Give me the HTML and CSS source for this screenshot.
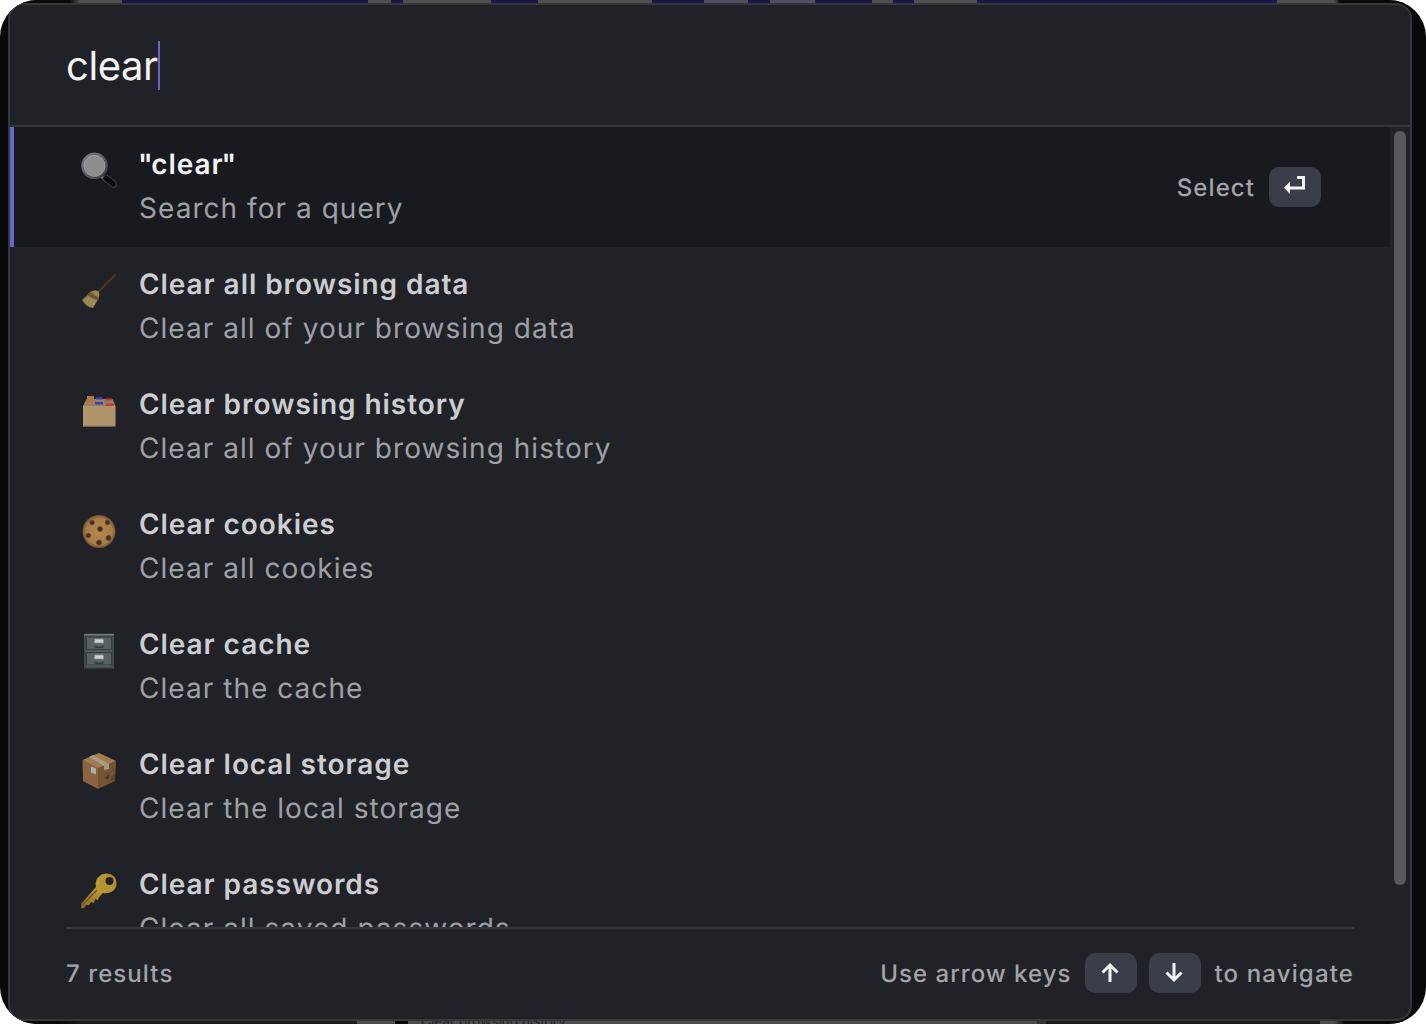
FILE: index.html
```html
<!DOCTYPE html>
<html lang="en">
<head>
<meta charset="utf-8">
<title>Command palette</title>
<link rel="stylesheet" href="styles.css">
</head>
<body>
<div class="window">
  <div class="backdrop-top"></div>
  <main class="palette">
    <header class="search"><span class="query">clear</span><span class="caret"></span></header>
    <section class="results">
      <div class="list">
        <article class="item selected">
          <svg class="icon" viewBox="0 0 60 60"><defs><linearGradient id="rim" x1="0" y1="0" x2="1" y2="1"><stop stop-color="#777b80"/><stop offset="1" stop-color="#3b4047"/></linearGradient></defs><path d="M31 36l5 5" stroke="#77787b" stroke-width="3"/><path d="M36.500 38.500l6.500 5.500" stroke="#3c3e42" stroke-width="7.500" stroke-linecap="round"/><path d="M36.500 38.500l6.500 5.500" stroke="#0a0b0d" stroke-width="5.500" stroke-linecap="round"/><circle cx="24.500" cy="25.800" r="12" fill="#8b8d8e" stroke="url(#rim)" stroke-width="2.500"/><circle cx="24.500" cy="25.800" r="10.500" fill="none" stroke="#999b9c" stroke-width=".8"/></svg>
          <div class="copy"><h2><span class="quote">"</span>clea<span class="last">r</span>"</h2><p>Search for a query</p></div>
          <div class="action"><span>Select</span><kbd><svg viewBox="0 0 52 40"><path d="M28 10.500h6.500v10.500H20" fill="none" stroke="#f2f2f3" stroke-width="3"/><path d="M15 20.800l6-6.300v12.600z" fill="#f2f2f3"/></svg></kbd></div>
        </article>
        <article class="item">
          <svg class="icon" viewBox="0 0 60 60"><path d="M28 32L45 15" stroke="#4e3528" stroke-width="1.900" stroke-linecap="round"/><path d="M20 32q5-3 8-1 2 2 1 6-2 5-6 11-7-1-11-8 5-4 8-8z" fill="#94834f"/><path d="M20 32l9 6-1 3-11-6z" fill="#735136"/><path d="M19 38l-3 5m6-4-3 6m6-5-3 6M24.500 32l3 2" stroke="#b09c64" stroke-width=".7"/></svg>
          <div class="copy"><h2>Clear all browsing data</h2><p>Clear all of your browsing data</p></div>
        </article>
        <article class="item">
          <svg class="icon" viewBox="0 0 60 60"><path d="M13 26l3.500-7h26l3 7z" fill="#9a8060"/><path d="M17 16h7v3h-7zM16 20h8v2.500h-8z" fill="#b2763c"/><path d="M26 17.500h7v2h-7zM25 22h8v2.500h-8z" fill="#3443c4"/><path d="M35 18.500h7v2h-7zM36 23.500h8v2.500h-8z" fill="#bd3c3c"/><path d="M13 26h32.500v20.500H13z" fill="#b1936c"/><path d="M13 46.200h32.500" stroke="#7e6a50"/></svg>
          <div class="copy"><h2>Clear browsing history</h2><p>Clear all of your browsing history</p></div>
        </article>
        <article class="item">
          <svg class="icon" viewBox="0 0 60 60"><defs><radialGradient id="dough"><stop stop-color="#b58a50"/><stop offset=".8" stop-color="#a87c46"/><stop offset="1" stop-color="#71502f"/></radialGradient></defs><circle cx="29" cy="31.500" r="16.500" fill="url(#dough)"/><g fill="#40302a" stroke="#674328" stroke-width=".8"><circle cx="22" cy="22.500" r="2.300"/><circle cx="37.500" cy="22.500" r="2.300"/><circle cx="30" cy="29" r="2.500"/><circle cx="18.300" cy="35.500" r="2.300"/><circle cx="38.500" cy="38" r="2.500"/><circle cx="29" cy="42.500" r="2.500"/></g></svg>
          <div class="copy"><h2>Clear cookies</h2><p>Clear all cookies</p></div>
        </article>
        <article class="item">
          <svg class="icon" viewBox="0 0 60 60"><path d="M14 13.500h30v35H14z" fill="#40494c"/><path d="M14 14h30v1.500H14z" fill="#6d7c80"/><path d="M16.500 17h25v12.500h-25zM16.500 32.500h25v12.500h-25z" fill="#576063" stroke="#343c3f"/><path d="M16 31h26M16 46h26" stroke="#66757a" stroke-width=".8"/><path d="M24.500 19h9v4h-9zM24.500 35h9v4h-9z" fill="#cdd0ce" stroke="#868e8e" stroke-width=".7"/><path d="M24.500 26.500q4.500 2 9 0M24.500 42.500q4.500 2 9 0" fill="none" stroke="#30373a" stroke-width="1.500"/></svg>
          <div class="copy"><h2>Clear cache</h2><p>Clear the cache</p></div>
        </article>
        <article class="item">
          <svg class="icon" viewBox="0 0 60 60"><path d="M12.500 20l16.500-7 17 8-17 9z" fill="#a27b50"/><path d="M12.500 20l15.500 8v21l-15-8z" fill="#8a6340"/><path d="M28 28l18-7-1 20-17 8z" fill="#765234"/><path d="M19 17l4-2 16 9v5l-5 1v-4z" fill="#a99a84"/><path d="M21 26.500l5 2v6l-5-2z" fill="#a8adae"/><path d="M35 38l4-3-1 4zm7-2v5m2-6v5" fill="#44301f" stroke="#44301f" stroke-width=".8"/></svg>
          <div class="copy"><h2>Clear local storage</h2><p>Clear the local storage</p></div>
        </article>
        <article class="item">
          <svg class="icon" viewBox="0 0 60 60"><defs><linearGradient id="brass" x1="1" y1="0" x2="0" y2="1"><stop stop-color="#a88c2c"/><stop offset=".5" stop-color="#b89833"/><stop offset="1" stop-color="#8a6825"/></linearGradient></defs><path fill-rule="evenodd" d="M26 27C24 18 31 13.500 36 13.500 43 13.500 46.500 18 46.500 23 46.500 31 40 34 33 33L29 37l-1 3-3-1-1 4-3-1-2 3h-3l-2 3-3 .2.500-5zM39.500 17a4 4 0 100 8 4 4 0 100-8z" fill="url(#brass)"/><path d="M27 30L13 44.500" stroke="#6d5524" stroke-width="1.200"/><path d="M28 25q0-8 8-9.500" fill="none" stroke="#c2aa42"/></svg>
          <div class="copy"><h2>Clear passwords</h2><p>Clear all saved passwords</p></div>
        </article>
      </div>
      <div class="track"><div class="thumb"></div></div>
    </section>
    <footer class="footer">
      <span class="count">7 results</span>
      <div class="hint"><span class="lead">Use arrow keys</span>
        <kbd><svg viewBox="0 0 52 40"><path d="M25 29V12M17.500 19.500L25 12l7.500 7.500" fill="none" stroke="#f2f2f3" stroke-width="3"/></svg></kbd>
        <kbd><svg viewBox="0 0 52 40"><path d="M25 10v17M17.500 19.500L25 27l7.500-7.500" fill="none" stroke="#f2f2f3" stroke-width="3"/></svg></kbd>
        <span class="tail">to navigate</span></div>
    </footer>
  </main>
  <div class="backdrop-bottom"><span>Clear browsing history</span></div>
</div>
</body>
</html>
```
FILE: styles.css
```css
* { box-sizing: border-box; }
body { margin: 0; background: #fff; font-family: Inter, "Liberation Sans", sans-serif; color: #a3a4a8; text-rendering: geometricPrecision; }
.window { width: 1426px; height: 1024px; border-radius: 37px; overflow: hidden; background: #090909; display: flex; flex-direction: column; }
.backdrop-top { height: 3px; flex: none; background: linear-gradient(90deg, #090909 70px, #505050 80px 122px, #171848 122px 368px, #505050 368px 391px, #171848 391px 403px, #505050 403px 491px, #171848 491px 538px, #505050 538px 652px, #171848 652px 704px, #505064 704px 748px, #171848 748px 770px, #505064 770px 815px, #171848 815px 872px, #505050 872px 893px, #171848 893px 914px, #505050 914px 977px, #171848 977px 1277px, #505050 1277px 1334px, #090909 1340px); }
.backdrop-bottom { height: 3px; flex: none; overflow: hidden; padding-left: 421px; font-size: 14px; line-height: 16px; letter-spacing: -.2px; color: #262626; background: linear-gradient(90deg, #090909 60px, #1b1b1b 80px 357px, #4c4c4c 357px 395px, #090909 395px 408px, #4c4c4c 408px 1037px, #333 1037px 1046px, #1b1b1b 1046px 1320px, #4c4c4c 1320px 1334px, #090909 1345px); }
.backdrop-bottom span { display: block; margin-top: -7px; }
.palette { width: 1404px; height: 1018px; margin-left: 8px; border: 2px solid #36373c; border-radius: 16px; background: #212227; display: flex; flex-direction: column; overflow: hidden; }
.search { height: 122px; flex: none; border-bottom: 2px solid #36373c; padding: 0 56px; display: flex; align-items: center; }
.query { font-size: 40px; line-height: 48px; letter-spacing: -.4px; padding-top: 2px; color: #f2f2f3; }
.caret { width: 2px; height: 49px; background: #6168c8; }
.results { height: 800px; flex: none; display: flex; }
.list { width: 1380px; overflow: hidden; }
.item { height: 120px; display: flex; padding: 15px 69px 0 60px; }
.selected { background: #191a1f; border-left: 4px solid #6168c8; padding-left: 56px; }
.icon { width: 60px; height: 60px; flex: none; margin-top: -2px; }
.copy { flex: 1; margin-left: 9px; }
h2, p { margin: 0; font-size: 28px; line-height: 44px; white-space: nowrap; }
h2 { font-weight: 600; letter-spacing: .93px; color: #cccdd0; }
.selected h2 { color: #f2f2f3; margin-left: -1px; }
.quote { letter-spacing: -1.5px; }
.last { letter-spacing: -1px; }
p { font-weight: 400; letter-spacing: 1.04px; color: #9fa0a5; }
.action, .hint { display: flex; align-items: center; font-size: 24px; font-weight: 500; letter-spacing: 1.08px; }
.action { height: 90px; gap: 14px; }
kbd { width: 52px; height: 40px; border-radius: 10px; background: #3a3e49; display: block; flex: none; }
kbd svg { display: block; width: 52px; height: 40px; }
.track { width: 20px; padding: 4px 0 0 4px; }
.thumb { width: 12px; height: 754px; border-radius: 6px; background: #58595d; }
.footer { height: 92px; margin: 0 56px; padding-bottom: 2px; border-top: 2px solid #36373c; display: flex; align-items: center; justify-content: space-between; font-size: 24px; }
.count { font-weight: 500; letter-spacing: 1.08px; }
.hint { gap: 12px; }
.lead { margin-right: 2px; letter-spacing: 1.02px; }
.tail { margin-left: 1px; letter-spacing: 1.15px; }
```
